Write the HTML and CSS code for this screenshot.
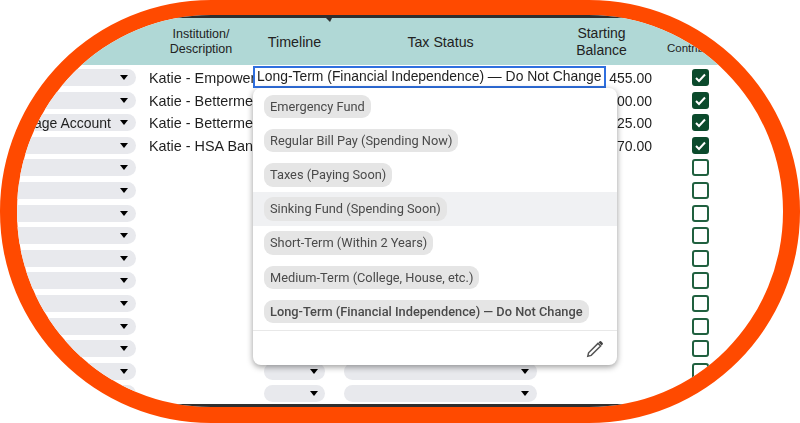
FILE: index.html
```html
<!DOCTYPE html>
<html lang="en">
<head>
  <meta charset="UTF-8" />
  <title>Accounts</title>
  <link rel="stylesheet" href="styles.css">
</head>
<body>
  <div class="frame">
    <div class="sheet">
      <div class="topline"></div>
      <div class="head cols">
        <div class="h-inst">Institution/<br>Description</div>
        <div class="h-time">Timeline</div>
        <div class="h-tax">Tax Status</div>
        <div class="h-bal">Starting<br>Balance</div>
        <div class="h-con">Contributions</div>
      </div>

      <div class="rows">
        <div class="cols row">
          <div class="pill"><i class="caret"></i></div>
          <div class="name">Katie - Empower</div><div></div><div></div>
          <div class="bal">455.00</div>
          <div class="check on"><svg viewBox="0 0 17 17"><path d="M4 9l3 3 6-6.500"/></svg></div>
        </div>
        <div class="cols row">
          <div class="pill"><i class="caret"></i></div>
          <div class="name">Katie - Betterment</div><div></div><div></div>
          <div class="bal">00.00</div>
          <div class="check on"><svg viewBox="0 0 17 17"><path d="M4 9l3 3 6-6.500"/></svg></div>
        </div>
        <div class="cols row">
          <div class="pill"><span class="pill-text">Brokerage Account</span><i class="caret"></i></div>
          <div class="name">Katie - Betterment</div><div></div><div></div>
          <div class="bal">25.00</div>
          <div class="check on"><svg viewBox="0 0 17 17"><path d="M4 9l3 3 6-6.500"/></svg></div>
        </div>
        <div class="cols row">
          <div class="pill"><i class="caret"></i></div>
          <div class="name">Katie - HSA Bank</div><div></div><div></div>
          <div class="bal">70.00</div>
          <div class="check on"><svg viewBox="0 0 17 17"><path d="M4 9l3 3 6-6.500"/></svg></div>
        </div>
        <div class="cols row"><div class="pill"><i class="caret"></i></div><div></div><div></div><div></div><div></div><div class="check"></div></div>
        <div class="cols row"><div class="pill"><i class="caret"></i></div><div></div><div></div><div></div><div></div><div class="check"></div></div>
        <div class="cols row"><div class="pill"><i class="caret"></i></div><div></div><div></div><div></div><div></div><div class="check"></div></div>
        <div class="cols row"><div class="pill"><i class="caret"></i></div><div></div><div></div><div></div><div></div><div class="check"></div></div>
        <div class="cols row"><div class="pill"><i class="caret"></i></div><div></div><div></div><div></div><div></div><div class="check"></div></div>
        <div class="cols row"><div class="pill"><i class="caret"></i></div><div></div><div></div><div></div><div></div><div class="check"></div></div>
        <div class="cols row"><div class="pill"><i class="caret"></i></div><div></div><div></div><div></div><div></div><div class="check"></div></div>
        <div class="cols row"><div class="pill"><i class="caret"></i></div><div></div><div></div><div></div><div></div><div class="check"></div></div>
        <div class="cols row"><div class="pill"><i class="caret"></i></div><div></div><div></div><div></div><div></div><div class="check"></div></div>
        <div class="cols row">
          <div class="pill"><i class="caret"></i></div><div></div>
          <div class="pill pill-time"><i class="caret"></i></div>
          <div class="pill pill-tax"><i class="caret"></i></div>
          <div></div><div class="check"></div>
        </div>
        <div class="cols row">
          <div class="pill"><i class="caret"></i></div><div></div>
          <div class="pill pill-time"><i class="caret"></i></div>
          <div class="pill pill-tax"><i class="caret"></i></div>
          <div></div><div class="check"></div>
        </div>
      </div>

      <div class="bottomline"></div>
    </div>

    <!-- open cell and its dropdown lie over the table -->
    <i class="notch"></i>
    <div class="editing">Long-Term (Financial Independence) — Do Not Change</div>
    <div class="menu">
      <div class="menu-list">
        <div class="opt"><span class="chip">Emergency Fund</span></div>
        <div class="opt"><span class="chip">Regular Bill Pay (Spending Now)</span></div>
        <div class="opt"><span class="chip">Taxes (Paying Soon)</span></div>
        <div class="opt hover"><span class="chip">Sinking Fund (Spending Soon)</span></div>
        <div class="opt"><span class="chip">Short-Term (Within 2 Years)</span></div>
        <div class="opt"><span class="chip">Medium-Term (College, House, etc.)</span></div>
        <div class="opt"><span class="chip current">Long-Term (Financial Independence) — Do Not Change</span></div>
      </div>
      <div class="menu-foot">
        <svg class="pencil" viewBox="0 0 20 20">
          <path class="pencil-body" d="M2.800 17.200l.8-3.400L13 4.400 15.600 7l-9.400 9.400z"/>
          <path class="pencil-end" d="M13.600 3.400l1.100-1.100a1 1 0 0 1 1.400 0l1.600 1.600a1 1 0 0 1 0 1.400l-1.100 1.100z"/>
        </svg>
      </div>
    </div>
  </div>
</body>
</html>
```

FILE: styles.css
```css
body {
  margin: 0;
  background-color: #ffffff;
  font-family: "Liberation Sans", Arial, sans-serif;
  color: #1f1f1f;
}

.frame {
  position: relative;
  box-sizing: border-box;
  width: 800px;
  height: 423px;
  border: solid #ff4a00;
  border-width: 15px 17px 16px 17px;
  border-radius: 211px;
  overflow: hidden;
}

.sheet {
  display: flex;
  flex-direction: column;
  height: 100%;
  filter: blur(0.35px);
}

.topline,
.bottomline {
  flex: none;
  height: 3px;
  background-color: #2f2f2f;
}

/* shared columns for header and rows */
.cols {
  display: grid;
  grid-template-columns: 132px 104px 91px 193px 115px 1fr;
}

.head {
  flex: none;
  height: 47px;
  align-items: center;
  background-color: #b0d8d6;
  text-align: center;
  color: #222;
}
.h-inst {
  font-size: 12.500px;
  line-height: 15px;
  grid-column: 2;
}
.h-time {
  font-size: 14.300px;
  margin-left: 11px;
  width: 61px;
}
.h-tax {
  font-size: 14.200px;
}
.h-bal {
  font-size: 14px;
  line-height: 17px;
  padding-left: 14px;
}
.h-con {
  font-size: 11.500px;
  padding: 12px 0 0 40px;
  margin-left: -25px;
  white-space: nowrap;
  text-align: left;
}

.rows {
  flex: 1;
  min-height: 0;
  padding-top: 4px;
  overflow: hidden;
}
.row {
  height: 22.600px;
  font-size: 14px;
}

.pill {
  display: flex;
  align-items: center;
  justify-content: flex-end;
  height: 17px;
  margin-right: 13px;
  padding-right: 8px;
  border-radius: 0 9px 9px 0;
  background-color: #e8e9ed;
  overflow: hidden;
}
.pill-text {
  margin-right: 9px;
  white-space: nowrap;
}
.pill-time,
.pill-tax {
  margin-right: 0;
  border-radius: 9px;
}
.pill-time {
  margin-left: 11px;
  width: 61px;
  box-sizing: border-box;
  padding-right: 7px;
}
.caret {
  flex: none;
  width: 0;
  height: 0;
  border-left: 4.500px solid transparent;
  border-right: 4.500px solid transparent;
  border-top: 5px solid #000;
}

.name {
  padding-top: 1px;
  font-size: 14.400px;
  white-space: nowrap;
  overflow: hidden;
}
.bal {
  padding-top: 1px;
  text-align: right;
}

.check {
  box-sizing: border-box;
  width: 17px;
  height: 17px;
  margin-left: 40px;
  border: 2px solid #20603f;
  border-radius: 3px;
}
.check.on {
  background-color: #0b4a2c;
  border-color: #0b4a2c;
}
.check svg {
  display: block;
  width: 17px;
  height: 17px;
  margin: -2px;
  fill: none;
  stroke: #fff;
  stroke-width: 2;
}

.notch {
  position: absolute;
  left: 309px;
  top: 3px;
  width: 0;
  height: 0;
  border-left: 4px solid transparent;
  border-right: 2px solid transparent;
  border-top: 4px solid #2f2f2f;
}

.editing {
  position: absolute;
  left: 236px;
  top: 51px;
  box-sizing: border-box;
  width: 353px;
  height: 22px;
  padding-left: 2px;
  border: 2px solid #2f6fdf;
  background-color: #fff;
  font-size: 13.900px;
  line-height: 17px;
  white-space: nowrap;
  overflow: hidden;
  filter: blur(0.3px);
}

.menu {
  position: absolute;
  left: 236px;
  top: 73px;
  box-sizing: border-box;
  width: 364px;
  height: 277px;
  padding-top: 1.500px;
  border-radius: 8px;
  background-color: #fff;
  box-shadow: 0 2px 6px rgba(0, 0, 0, 0.4);
  font-family: Roboto, sans-serif;
  overflow: hidden;
}
.opt {
  display: flex;
  align-items: center;
  height: 34.170px;
  padding-left: 11px;
}
.opt.hover {
  background-color: #f0f1f3;
}
.chip {
  padding: 0 6px;
  height: 23.500px;
  line-height: 23.500px;
  border-radius: 9px;
  background-color: #e5e5e5;
  color: #4a4a4a;
  font-size: 12.800px;
  white-space: nowrap;
  filter: blur(0.3px);
}
.chip.current {
  font-weight: 500;
}
.menu-foot {
  display: flex;
  align-items: center;
  justify-content: flex-end;
  height: 35px;
  margin-top: 1px;
  padding: 3px 12px 0 0;
  box-sizing: border-box;
  border-top: 1px solid #e8e8e8;
}
.pencil {
  width: 20px;
  height: 20px;
}
.pencil-body {
  fill: none;
  stroke: #555;
  stroke-width: 1.500;
}
.pencil-end {
  fill: #444;
}
```
